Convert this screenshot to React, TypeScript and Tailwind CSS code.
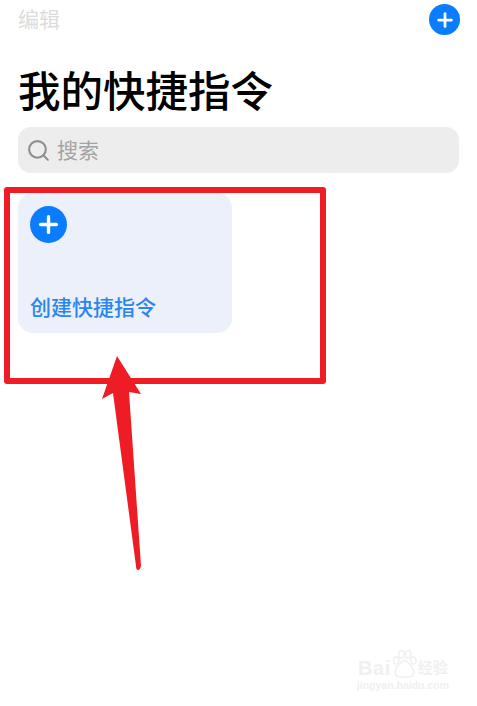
import { Plus, Search } from 'lucide-react';

const PlusCircle = ({ outer, icon }: { outer: string; icon: string }) => (
  <div className={`${outer} flex items-center justify-center rounded-full bg-[#0a7cff]`}>
    <Plus className={`${icon} text-white`} strokeWidth={3} />
  </div>
);

const Watermark = () => (
  <div className="absolute right-[28px] bottom-[14px] flex flex-col items-center text-[#f0f0f0] font-['Liberation_Sans','Noto_Sans_CJK_SC',sans-serif]">
    <div className="flex items-end">
      <span className="text-[20px] leading-[20px] font-bold tracking-[0.5px]">Bai</span>
      <svg width="27" height="29" viewBox="0 0 26 28" fill="none" stroke="currentColor" strokeWidth="1.5">
        <ellipse cx="5" cy="11" rx="2.6" ry="3.4" />
        <ellipse cx="10" cy="5" rx="2.6" ry="3.6" />
        <ellipse cx="16.5" cy="5" rx="2.6" ry="3.6" />
        <ellipse cx="21.5" cy="11" rx="2.6" ry="3.4" />
        <path d="M13 11c-3 0-4 3-6 5s-3 3-3 6c0 3 2 5 5 5h8c3 0 5-2 5-5 0-3-1-4-3-6s-3-5-6-5z" />
      </svg>
      <span className="text-[15px] leading-[20px] font-bold">经验</span>
    </div>
    <span className="text-[10.5px] leading-[14px] font-bold">jingyan.baidu.com</span>
  </div>
);

export default function App() {
  return (
    <div className="relative h-[706px] w-[477px] overflow-hidden bg-white font-['Noto_Sans_CJK_SC',sans-serif]">
      {/* Top bar */}
      <div className="flex items-start justify-between pl-[18px] pr-[17px] pt-[4px]">
        <span className="-mt-[1px] text-[21px] leading-[31px] text-[#dcdcdc]">编辑</span>
        <PlusCircle outer="h-[31px] w-[31px]" icon="h-[22px] w-[22px]" />
      </div>

      <h1 className="mt-[29px] pl-[18px] text-[42.5px] leading-[50px] font-medium text-black">我的快捷指令</h1>

      {/* Search */}
      <div className="ml-[18px] mr-[18px] mt-[13px] flex h-[46px] items-center rounded-[13px] bg-[#ededed] pl-[8px]">
        <Search className="h-[25px] w-[25px] text-[#8e8e8e]" strokeWidth={2} />
        <span className="mb-[3px] ml-[6px] text-[21px] leading-[30px] text-[#a3a3a3]">搜索</span>
      </div>

      {/* Create card */}
      <div className="ml-[18px] mt-[20px] flex h-[140px] w-[214px] flex-col justify-between rounded-[15px] bg-[#ecf0fb] pb-[12px] pl-[12px] pt-[13px]">
        <PlusCircle outer="h-[37px] w-[37px]" icon="h-[27px] w-[27px]" />
        <span className="text-[21px] leading-[30px] font-medium text-[#2a85ee]">创建快捷指令</span>
      </div>

      {/* Red annotation frame */}
      <div className="absolute left-[4px] top-[187px] h-[197px] w-[322px] rounded-[3px] border-[6px] border-[#ee1c25]" />

      {/* Red annotation arrow */}
      <svg className="absolute left-0 top-0" width="477" height="706" viewBox="0 0 477 706">
        <path
          d="M117 356L141 394L129 392L141 566Q140 570 138 570Q136 570 136 566L113 393L102 399Z"
          fill="#ee1c25"
        />
      </svg>

      <Watermark />
    </div>
  );
}
